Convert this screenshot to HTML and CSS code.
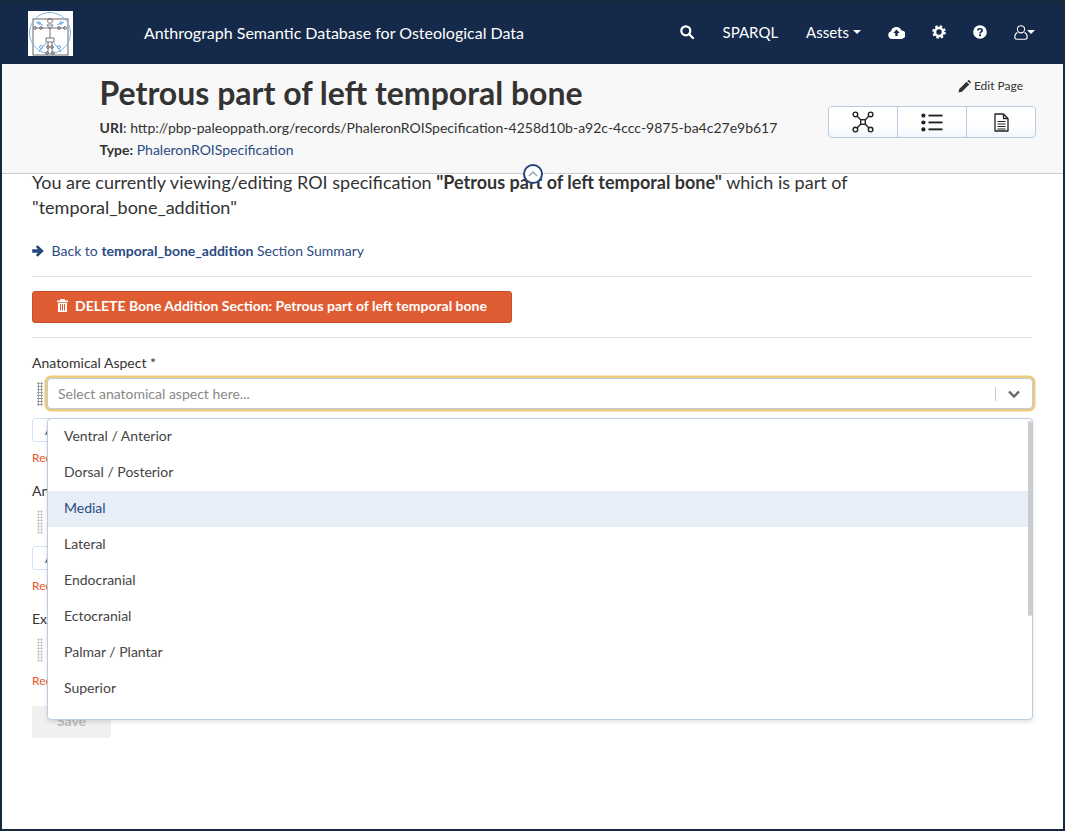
FILE: index.html
```html
<!DOCTYPE html>
<html lang="en">
<head>
    <meta charset="UTF-8">
    <meta name="viewport" content="width=device-width, initial-scale=1.0">
    <title>Anthrograph</title>
    <link rel="stylesheet" href="styles.css">
</head>
<body>
<div class="frame">

    <nav class="navbar">
        <a class="logo" href="#">
            <svg width="45" height="45" viewBox="0 0 45 45">
                <rect width="45" height="45" fill="#fff"/>
                <rect x="5" y="8" width="35" height="36" fill="none" stroke="#666" stroke-width="1"/>
                <circle cx="22" cy="22" r="20.500" fill="none" stroke="#7fb4e6" stroke-width="1"/>
                <g fill="none" stroke="#555" stroke-width=".8">
                    <circle cx="22" cy="10" r="2.400"/>
                    <path d="M7 17h30M19 14h6l-3 4zM22 18v9M18 27h8v4h-8zM20 31v11M24 31v11"/>
                    <circle cx="7" cy="17" r="1.400"/><circle cx="13" cy="17" r="1.400"/>
                    <circle cx="31" cy="17" r="1.400"/><circle cx="37" cy="17" r="1.400"/>
                    <circle cx="20" cy="36" r="1.400"/><circle cx="24" cy="36" r="1.400"/>
                    <circle cx="19" cy="42" r="1.400"/><circle cx="25" cy="42" r="1.400"/>
                </g>
                <g fill="none" stroke="#6aa9e4" stroke-width="1">
                    <path d="M8 11l7 3M36 11l-7 3M11 41l7-9M33 41l-7-9"/>
                    <circle cx="13" cy="36" r="1.500"/><circle cx="31" cy="36" r="1.500"/>
                    <circle cx="11" cy="12" r="1.300"/><circle cx="33" cy="12" r="1.300"/>
                </g>
            </svg>
        </a>
        <a class="brand" href="#">Anthrograph Semantic Database for Osteological Data</a>
        <ul class="nav-items">
            <li class="nav-search">
                <svg width="14" height="14" viewBox="0 0 14 14" fill="none" stroke="#fff" stroke-width="2.200"><circle cx="5.800" cy="5.800" r="4.500"/><path d="M9 9l4.200 4.200" stroke-linecap="round"/></svg>
            </li>
            <li class="nav-sparql">SPARQL</li>
            <li class="nav-assets">Assets<span class="caret"></span></li>
            <li class="nav-upload">
                <svg width="17" height="13" viewBox="0 0 17 13"><path d="M4 13a4 4 0 0 1-1-7.800A5.500 5.500 0 0 1 13.300 4.200 4.400 4.400 0 0 1 13 13z" fill="#fff"/><path d="M8.500 3.500l3.200 3.400H9.700V10H7.300V6.900H5.300z" fill="#152a4a"/></svg>
            </li>
            <li class="nav-cog">
                <svg width="14" height="14" viewBox="0 0 14 14"><circle cx="7" cy="7" r="4" fill="none" stroke="#fff" stroke-width="2.600"/><circle cx="7" cy="7" r="5.600" fill="none" stroke="#fff" stroke-width="2.400" stroke-dasharray="2.400 2"/></svg>
            </li>
            <li class="nav-help">
                <svg width="14" height="14" viewBox="0 0 14 14"><circle cx="7" cy="7" r="6.800" fill="#fff"/><path d="M4.800 5.300C5 3.200 9.200 3.200 9.200 5.400 9.200 6.900 7 6.900 7 8.400" fill="none" stroke="#152a4a" stroke-width="1.700"/><rect x="6" y="9.400" width="2" height="1.800" fill="#152a4a"/></svg>
            </li>
            <li class="nav-user">
                <svg width="14" height="15" viewBox="0 0 14 15" fill="none" stroke="#fff" stroke-width="1.100"><circle cx="7" cy="4.300" r="3.600"/><path d="M3.500 7.600C1.600 8.500 .8 10 .8 12c0 1.400.8 2.200 2 2.200h8.400c1.200 0 2-.8 2-2.200 0-2-.8-3.500-2.700-4.400"/></svg><span class="caret caret-small"></span>
            </li>
        </ul>
    </nav>

    <header class="page-header">
        <div class="header-info">
            <h1>Petrous part of left temporal bone</h1>
            <p class="meta-uri"><b>URI</b>: http://pbp-paleoppath.org/records/PhaleronROISpecification-4258d10b-a92c-4ccc-9875-ba4c27e9b617</p>
            <p class="meta-type"><b>Type:</b> <a href="#">PhaleronROISpecification</a></p>
        </div>
        <div class="header-actions">
            <a class="edit-link" href="#">
                <svg width="13" height="13" viewBox="0 0 13 13"><path d="M.5 12.500l.7-3.400L8.600 1.700l2.700 2.700-7.400 7.400zM9.400.9l.7-.6c.4-.3.9-.3 1.200 0l1.400 1.400c.3.3.3.8 0 1.200l-.6.7z" fill="#333"/></svg>
                Edit Page
            </a>
            <div class="view-group">
                <button class="view-btn">
                    <svg width="22" height="22" viewBox="0 0 22 22" fill="none" stroke="#222" stroke-width="1.400"><rect x="8.700" y="8.700" width="4.600" height="4.600"/><circle cx="3.400" cy="3.400" r="2.300"/><circle cx="18.600" cy="3.400" r="2.300"/><circle cx="3.400" cy="18.600" r="2.300"/><circle cx="18.600" cy="18.600" r="2.300"/><path d="M5 5l3.700 3.700M17 5l-3.700 3.700M5 17l3.700-3.700M17 17l-3.700-3.700"/></svg>
                </button>
                <button class="view-btn">
                    <svg width="22" height="19" viewBox="0 0 22 19" fill="#222"><circle cx="2.400" cy="2.600" r="2.100"/><circle cx="2.400" cy="9.500" r="2.100"/><circle cx="2.400" cy="16.400" r="2.100"/><rect x="7.500" y="1.600" width="14" height="1.900"/><rect x="7.500" y="8.500" width="14" height="1.900"/><rect x="7.500" y="15.400" width="14" height="1.900"/></svg>
                </button>
                <button class="view-btn">
                    <svg width="15" height="19" viewBox="0 0 15 19" fill="none" stroke="#222" stroke-width="1.300"><path d="M1 1h8.500L14 5.500V18H1zM9.500 1v4.500H14" stroke-linejoin="round"/><path d="M3.500 8.500h8M3.500 11h8M3.500 13.500h8M3.500 16h8" stroke-width="1.100"/></svg>
                </button>
            </div>
        </div>
        <button class="collapse-btn" aria-label="Collapse">
            <svg width="10" height="6" viewBox="0 0 10 6" fill="none" stroke="#9aa5b4" stroke-width="1.500"><path d="M1 5l4-4 4 4"/></svg>
        </button>
    </header>

    <main class="content">
        <p class="intro">You are currently viewing/editing ROI specification <b>"Petrous part of left temporal bone"</b> which is part of "temporal_bone_addition"</p>

        <a class="back-link" href="#">
            <svg width="12" height="12" viewBox="0 0 12 12"><path d="M5.700 .3L11.800 6 5.700 11.700 3.900 9.900 6.100 7.700H.2V4.300h5.900L3.900 2.100z" fill="#24467c"/></svg>
            Back to <b>temporal_bone_addition</b> Section Summary
        </a>

        <hr class="rule rule-top">

        <button class="delete-btn">
            <svg width="11" height="13" viewBox="0 0 11 13" fill="#fff"><path d="M3.500 0h4l.7 1.500H11v1.400H0V1.500h2.800zM1 3.700h9V13H1zM3 5v6.500h1V5zm2 0v6.500h1V5zm2 0v6.500h1V5z" fill-rule="evenodd"/></svg>
            DELETE Bone Addition Section: Petrous part of left temporal bone
        </button>

        <hr class="rule rule-bottom">

        <form class="roi-form">
            <div class="field">
                <label>Anatomical Aspect *</label>
                <div class="field-row">
                    <span class="handle"></span>
                    <div class="select select-open">
                        <span class="select-placeholder">Select anatomical aspect here...</span>
                        <span class="select-sep"></span>
                        <svg class="select-arrow" width="12" height="8" viewBox="0 0 12 8" fill="none" stroke="#666" stroke-width="2.400"><path d="M1 1.500l5 5 5-5"/></svg>
                        <div class="select-menu">
                            <ul class="menu-list">
                                <li>Ventral / Anterior</li>
                                <li>Dorsal / Posterior</li>
                                <li class="active">Medial</li>
                                <li>Lateral</li>
                                <li>Endocranial</li>
                                <li>Ectocranial</li>
                                <li>Palmar / Plantar</li>
                                <li>Superior</li>
                            </ul>
                            <span class="menu-thumb"></span>
                        </div>
                    </div>
                </div>
                <button type="button" class="add-btn">Add</button>
                <div class="required">Required</div>
            </div>

            <div class="field">
                <label>Anatomical Region *</label>
                <div class="field-row">
                    <span class="handle handle-light"></span>
                    <div class="select"></div>
                </div>
                <button type="button" class="add-btn">Add</button>
                <div class="required">Required</div>
            </div>

            <div class="field">
                <label>Extent *</label>
                <div class="field-row">
                    <span class="handle handle-light"></span>
                    <div class="select"></div>
                </div>
                <div class="required">Required</div>
            </div>

            <button type="button" class="save-btn" disabled>Save</button>
        </form>
    </main>

</div>
</body>
</html>
```

FILE: styles.css
```css
* { margin: 0; padding: 0; box-sizing: border-box; }
html, body { height: 100%; }
body {
    background: #16293f;
    font-family: "Lato", sans-serif;
    color: #333;
    font-size: 14px;
    overflow: hidden;
}
a { color: inherit; text-decoration: none; }
ul { list-style: none; }

.frame {
    position: absolute;
    top: 4px; left: 2px; right: 2px; bottom: 2px;
    background: #fff;
    overflow: hidden;
}

/* navbar */
.navbar {
    height: 60px;
    background: #152a4a;
    display: flex;
    align-items: center;
    padding: 0 28px 0 26px;
    color: #fff;
}
.logo { display: block; width: 45px; height: 45px; line-height: 0; margin-top: -1px; }
.brand { margin-left: 71px; font-size: 16px; margin-top: -3px; }
.nav-items { margin-left: auto; display: flex; align-items: center; font-size: 15px; margin-top: -4px; }
.nav-items li { display: flex; align-items: center; }
.nav-sparql { margin-left: 29px; }
.nav-assets { margin-left: 28px; }
.nav-upload { margin-left: 27px; }
.nav-cog { margin-left: 27px; }
.nav-help { margin-left: 27px; }
.nav-user { margin-left: 27px; }
.caret {
    display: inline-block;
    margin-left: 4px;
    border-top: 4px solid #fff;
    border-left: 4px solid transparent;
    border-right: 4px solid transparent;
}
.caret-small { margin-left: -1px; }

/* page header */
.page-header {
    position: relative;
    height: 110px;
    background: #f8f8f8;
    border-bottom: 1px solid #ccc;
    display: flex;
    justify-content: space-between;
    padding: 0 27px 0 97.500px;
}
.header-info h1 {
    font-size: 32px;
    font-weight: 700;
    line-height: 40px;
    margin-top: 9px;
    color: #333;
}
.meta-uri { margin-top: 5px; line-height: 20px; }
.meta-type { margin-top: 2px; line-height: 20px; }
.meta-type a { color: #2a4b83; }
.header-actions { display: flex; flex-direction: column; align-items: flex-end; }
.edit-link {
    display: flex;
    align-items: center;
    gap: 3px;
    font-size: 12px;
    line-height: 16px;
    margin-top: 14px;
    margin-right: 13px;
}
.view-group {
    display: flex;
    margin-top: 12px;
    width: 208px;
    height: 32px;
    border: 1px solid #b9cbe2;
    border-radius: 4px;
    overflow: hidden;
    background: linear-gradient(#fff 60%, #f1f6fd);
}
.view-btn {
    flex: 1;
    border: none;
    background: none;
    display: flex;
    align-items: center;
    justify-content: center;
}
.view-btn + .view-btn { border-left: 1px solid #b9cbe2; }
.collapse-btn {
    position: absolute;
    left: 521px;
    top: 100px;
    width: 20px;
    height: 20px;
    border-radius: 50%;
    background: #fff;
    border: 2px solid #24467c;
    display: flex;
    align-items: center;
    justify-content: center;
    z-index: 2;
}

/* content */
.content { padding: 0 31px 0 30px; }
.intro { font-size: 18px; line-height: 25px; margin-top: -4px; }
.back-link {
    display: block;
    color: #2a4b83;
    line-height: 20px;
    margin-top: 21px;
}
.back-link svg { margin-right: 4px; vertical-align: -1px; }
.rule { border: none; border-top: 1px solid #e3e3e3; }
.rule-top { margin-top: 15px; }
.rule-bottom { margin-top: 14px; }
.delete-btn {
    display: flex;
    align-items: center;
    justify-content: center;
    gap: 7px;
    width: 480px;
    height: 32px;
    margin-top: 14px;
    padding-bottom: 3px;
    background: #e05d33;
    border: 1px solid #c24d28;
    border-radius: 3px;
    color: #fff;
    font-family: inherit;
    font-size: 14px;
    font-weight: 700;
}

/* form */
.roi-form { margin-top: 16px; }
.field { height: 128px; }
.field:last-of-type { height: 96px; }
.field label { display: block; line-height: 18px; }
.field-row { display: flex; align-items: center; margin: 6px -1px 0 0; height: 31px; }
.handle {
    width: 6px;
    height: 24px;
    margin: 0 4px 0 5px;
    flex: none;
    background-image: radial-gradient(#a0a0a0 1.200px, transparent 1.400px);
    background-size: 3px 3px;
}
.handle-light { background-image: radial-gradient(#d0d0d0 1.200px, transparent 1.400px); }
.select {
    position: relative;
    flex: 1;
    height: 31px;
    display: flex;
    align-items: center;
    border: 1px solid #bccde3;
    border-radius: 4px;
    background: #fff;
}
.select-open { box-shadow: 0 0 0 2.500px #edcb7a; }
.select-placeholder { padding: 0 0 1px 10px; color: #888; flex: 1; }
.select-sep { width: 1px; height: 14px; background: #ccc; }
.select-arrow { margin: 0 12px; }
.select-menu {
    position: absolute;
    top: 39px;
    left: -1px;
    right: -1px;
    height: 302px;
    overflow: hidden;
    background: #fff;
    border: 1px solid #bccde3;
    border-radius: 4px;
    box-shadow: 0 2px 4px rgba(0, 0, 0, 0.12);
    z-index: 5;
}
.menu-list { margin-right: 1px; }
.menu-list li {
    height: 36px;
    line-height: 34px;
    padding-left: 16px;
    color: #444;
}
.menu-list li.active { background: #e7eef8; color: #2a4b83; }
.menu-thumb {
    position: absolute;
    top: 2px;
    right: 0;
    width: 4px;
    height: 195px;
    background: #ccc;
    border-radius: 2px;
}
.add-btn {
    display: block;
    margin-top: 9px;
    width: 60px;
    height: 24px;
    padding-left: 12px;
    text-align: left;
    background: #fff;
    border: 1px solid #d6e2f2;
    border-radius: 3px;
    color: #2a4b83;
    font-family: inherit;
    font-size: 12px;
}
.required { color: #e8532b; font-size: 12px; line-height: 16px; margin-top: 8px; }
.save-btn {
    display: block;
    width: 79px;
    height: 32px;
    padding-bottom: 3px;
    background: #f0f0f0;
    border: none;
    border-radius: 3px;
    color: #bbb;
    font-family: inherit;
    font-size: 14px;
    font-weight: 700;
}
```
